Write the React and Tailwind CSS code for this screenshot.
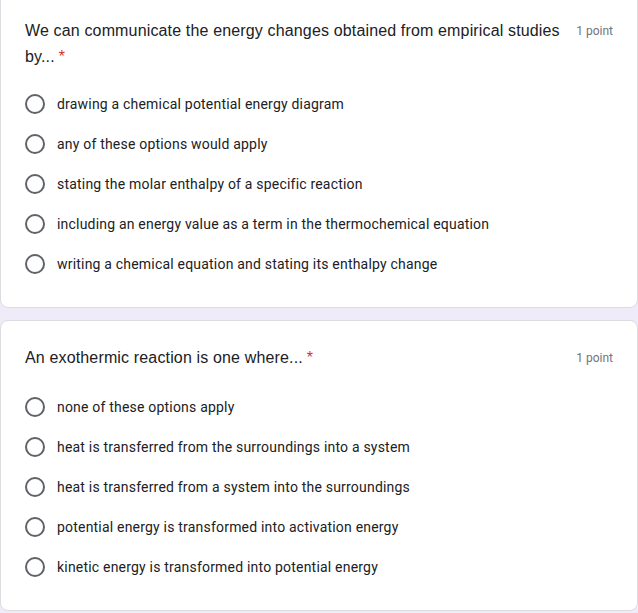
import React from 'react';

const questions = [
  {
    title: 'We can communicate the energy changes obtained from empirical studies by...',
    gap: 'mt-[14px]',
    options: [
      'drawing a chemical potential energy diagram',
      'any of these options would apply',
      'stating the molar enthalpy of a specific reaction',
      'including an energy value as a term in the thermochemical equation',
      'writing a chemical equation and stating its enthalpy change',
    ],
  },
  {
    title: 'An exothermic reaction is one where...',
    gap: 'mt-[16px]',
    options: [
      'none of these options apply',
      'heat is transferred from the surroundings into a system',
      'heat is transferred from a system into the surroundings',
      'potential energy is transformed into activation energy',
      'kinetic energy is transformed into potential energy',
    ],
  },
];

const Question = ({ q, className }) => (
  <div className={`bg-white rounded-lg border border-[#dadce0] px-6 pt-6 pb-[23px] ${className || ''}`}>
    <div className="flex items-start">
      <div className="flex-1 text-[16px] leading-[26px] text-[#202124] font-['Liberation_Sans',Arial,sans-serif] tracking-[0.15px]">
        {q.title}
        <span className="text-[#d93025] ml-1">*</span>
      </div>
      <div className="shrink-0 pl-2 text-[12px] leading-[26px] text-[#70757a] font-['Roboto',sans-serif]">1 point</div>
    </div>
    <div className={`${q.gap} flex flex-col`}>
      {q.options.map((opt) => (
        <label key={opt} className="flex items-center h-10 cursor-pointer">
          <span className="w-5 h-5 rounded-full border-2 border-[#5f6368] shrink-0" />
          <span className="ml-3 text-[14px] text-[#202124] font-['Roboto',sans-serif] tracking-[0.2px]">{opt}</span>
        </label>
      ))}
    </div>
  </div>
);

export default function App() {
  return (
    <div className="w-[638px] h-[613px] overflow-hidden bg-[#f0ebf8]">
      <div className="-mt-[7px]">
        <Question q={questions[0]} />
        <Question q={questions[1]} className="mt-[12px]" />
      </div>
    </div>
  );
}
